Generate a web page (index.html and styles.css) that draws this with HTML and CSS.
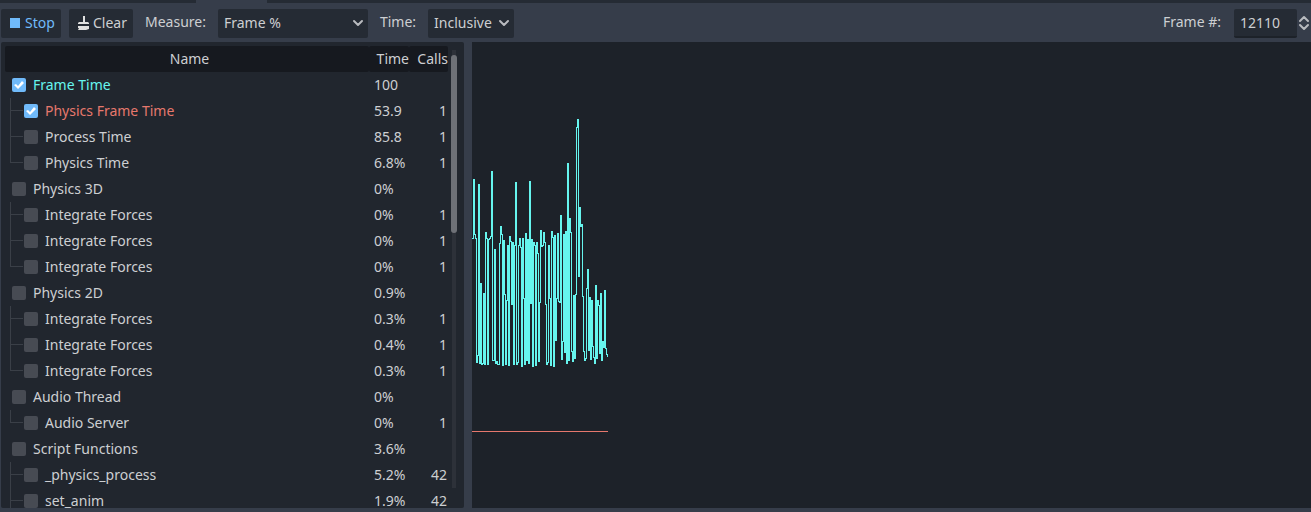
FILE: index.html
```html
<!DOCTYPE html>
<html lang="en">
<head>
  <meta charset="UTF-8">
  <meta name="viewport" content="width=device-width, initial-scale=1.0">
  <title>Profiler</title>
  <link rel="stylesheet" href="styles.css">
</head>
<body>
  <div class="tab-strip"><div class="active-tab"></div></div>

  <div class="toolbar">
    <button class="btn stop" type="button">
      <svg width="10" height="10"><rect width="10" height="10" fill="#70bafa"/></svg>Stop
    </button>
    <button class="btn clear" type="button">
      <svg width="11" height="14" viewBox="0 0 11 14" fill="#e0e0e0">
        <path d="M5 0h2v6h3l1 1v1H0V7l1-1h4zM0 10h11v3l-3 1H0l1-2H0z"/>
      </svg>Clear
    </button>
    <label for="measure">Measure:</label>
    <div class="select measure">
      <select id="measure">
        <option>Frame %</option>
        <option>Frame Time (ms)</option>
        <option>Average Time (ms)</option>
        <option>Physics Frame %</option>
      </select>
      <svg width="12" height="8" viewBox="0 0 12 8"><path d="M2 2l4 4 4-4"/></svg>
    </div>
    <label for="time">Time:</label>
    <div class="select time">
      <select id="time">
        <option>Inclusive</option>
        <option>Self</option>
      </select>
      <svg width="12" height="8" viewBox="0 0 12 8"><path d="M2 2l4 4 4-4"/></svg>
    </div>
    <label class="frame-label" for="frame">Frame #:</label>
    <input class="frame-input" id="frame" type="text" inputmode="numeric" value="12110">
    <button class="spin" type="button" aria-label="Change frame">
      <svg width="12" height="16" viewBox="0 0 12 16"><path d="M2 6l4-4 4 4M2 10l4 4 4-4"/></svg>
    </button>
  </div>

  <div class="split">
    <div class="tree">
      <table>
        <colgroup><col><col class="col-time"><col class="col-calls"></colgroup>
        <thead>
          <tr><th>Name</th><th>Time</th><th>Calls</th></tr>
        </thead>
        <tbody>
          <tr class="frame-time">
            <td><label><input type="checkbox" checked>Frame Time</label></td><td>100</td><td></td>
          </tr>
          <tr class="child physics-frame">
            <td><label><input type="checkbox" checked>Physics Frame Time</label></td><td>53.9</td><td>1</td>
          </tr>
          <tr class="child">
            <td><label><input type="checkbox">Process Time</label></td><td>85.8</td><td>1</td>
          </tr>
          <tr class="child last">
            <td><label><input type="checkbox">Physics Time</label></td><td>6.8%</td><td>1</td>
          </tr>
          <tr>
            <td><label><input type="checkbox">Physics 3D</label></td><td>0%</td><td></td>
          </tr>
          <tr class="child">
            <td><label><input type="checkbox">Integrate Forces</label></td><td>0%</td><td>1</td>
          </tr>
          <tr class="child">
            <td><label><input type="checkbox">Integrate Forces</label></td><td>0%</td><td>1</td>
          </tr>
          <tr class="child last">
            <td><label><input type="checkbox">Integrate Forces</label></td><td>0%</td><td>1</td>
          </tr>
          <tr>
            <td><label><input type="checkbox">Physics 2D</label></td><td>0.9%</td><td></td>
          </tr>
          <tr class="child">
            <td><label><input type="checkbox">Integrate Forces</label></td><td>0.3%</td><td>1</td>
          </tr>
          <tr class="child">
            <td><label><input type="checkbox">Integrate Forces</label></td><td>0.4%</td><td>1</td>
          </tr>
          <tr class="child last">
            <td><label><input type="checkbox">Integrate Forces</label></td><td>0.3%</td><td>1</td>
          </tr>
          <tr>
            <td><label><input type="checkbox">Audio Thread</label></td><td>0%</td><td></td>
          </tr>
          <tr class="child last">
            <td><label><input type="checkbox">Audio Server</label></td><td>0%</td><td>1</td>
          </tr>
          <tr>
            <td><label><input type="checkbox">Script Functions</label></td><td>3.6%</td><td></td>
          </tr>
          <tr class="child">
            <td><label><input type="checkbox">_physics_process</label></td><td>5.2%</td><td>42</td>
          </tr>
          <tr class="child">
            <td><label><input type="checkbox">set_anim</label></td><td>1.9%</td><td>42</td>
          </tr>
        </tbody>
      </table>
      <div class="scrollbar"><div class="thumb"></div></div>
    </div>

    <div class="graph">
      <svg width="136" height="390" viewBox="0 42 136 390" shape-rendering="crispEdges" fill="none">
        <g transform="translate(.5 .5)">
          <!-- frame time, one column per sample -->
          <path stroke="#66f5ee" d="M-1 238h1
            h1V179h1V234h1V238h1V362h1V355h1V184h1V363h1V283h1V364
            h1V363h1V293h1V364h1V232h1V238h1V364h1V239h1V238h1V236h1V171
            h1V360h1V360h1V249h1V363h1V361h1V364h1V364h1V243h1V226h1V234
            h1V365h1V240h1V294h1V364h1V300h1V245h1V365h1V236h1V241h1V304
            h1V242h1V364h1V245h1V182h1V364h1V362h1V245h1V238h1V247h1V366
            h1V238h1V298h1V364h1V233h1V360h1V239h1V363h1V181h1V303h1V239
            h1V366h1V242h1V245h1V365h1V242h1V253h1V361h1V302h1V230h1V246
            h1V245h1V232h1V242h1V304h1V364h1V362h1V245h1V298h1V365h1V231
            h1V237h1V366h1V235h1V340h1V298h1V233h1V301h1V302h1V215h1V359
            h1V341h1V234h1V352h1V231h1V363h1V163h1V360h1V218h1V232h1V351
            h1V361h1V295h1V358h1V294h1V127h1V119h1V276h1V207h1V226h1V224
            h1V296h1V351h1V360h1V358h1V288h1V269h1V350h1V297h1V359h1V300
            h1V346h1V357h1V363h1V285h1V358h1V300h1V305h1V353h1V293h1V360
            h1V341h1V347h1V290h1V348h1V354h1V356"/>
          <!-- physics frame time -->
          <path stroke="#e6786d" d="M-1 431h137"/>
        </g>
      </svg>
    </div>
  </div>
</body>
</html>
```
FILE: styles.css
```css
* {
  box-sizing: border-box;
}
body {
  margin: 0;
  height: 100vh;
  display: flex;
  flex-direction: column;
  overflow: hidden;
  background: #363d4a;
  color: #cdcfd2;
  font-family: "Noto Sans", sans-serif;
  font-size: 14px;
  line-height: 20px;
}
button, select, input {
  font: inherit;
  color: inherit;
  border: none;
  margin: 0;
}
svg {
  display: block;
  flex: none;
}

.tab-strip {
  height: 3px;
  flex: none;
  background: #252b34;
  padding-left: 196px;
}
.active-tab {
  width: 71px;
  height: 3px;
  background: #363d4a;
}

.toolbar {
  display: flex;
  flex: none;
  height: 39px;
  padding: 6px 0 4px 1px;
}
.toolbar label {
  height: 26px;
  line-height: 26px;
  margin: 0 12px;
}
.btn {
  display: flex;
  align-items: center;
  height: 29px;
  margin-right: 8px;
  background: #252b34;
  border-radius: 2px;
}
.stop {
  width: 60px;
  padding: 0 0 1px 9px;
  gap: 5px;
  color: #70bafa;
}
.clear {
  width: 64px;
  padding: 0 0 1px 9px;
  gap: 4px;
  margin-right: 0;
}
.select {
  position: relative;
  height: 29px;
}
.select select {
  appearance: none;
  width: 100%;
  height: 29px;
  padding: 0 6px 1px;
  background: #252b34;
  border-radius: 2px;
}
.select svg {
  position: absolute;
  right: 4px;
  top: 10px;
  pointer-events: none;
}
.select path, .spin path {
  fill: none;
  stroke: #b9bbbf;
  stroke-width: 2;
  stroke-linecap: round;
  stroke-linejoin: round;
}
.measure {
  width: 150px;
}
.time {
  width: 86px;
}
.toolbar .frame-label {
  margin: 0 13px 0 auto;
}
.frame-input {
  width: 63px;
  height: 29px;
  padding: 0 6px;
  background: #252b34;
  border-bottom: 2px solid #1d2229;
  border-radius: 2px;
}
.spin {
  width: 14px;
  height: 29px;
  padding: 0 0 1px 1px;
  background: none;
}

.split {
  display: flex;
  flex: 1;
  min-height: 0;
  gap: 8px;
  padding-left: 1px;
  margin-bottom: 4px;
}
.tree {
  display: flex;
  width: 463px;
  flex: none;
  padding: 4px 7px 0 4px;
  overflow: hidden;
  background: #21262e;
  border-radius: 2px;
}
table {
  flex: 1;
  align-self: flex-start;
  table-layout: fixed;
  border-collapse: collapse;
}
.col-time {
  width: 40px;
}
.col-calls {
  width: 39px;
}
th, td {
  height: 26px;
  padding: 0;
}
th {
  background: #16191f;
  border-radius: 2px;
  font-weight: normal;
  text-align: center;
}
th:first-child {
  padding-left: 5px;
}
th:nth-child(2), th:nth-child(3) {
  text-align: right;
}
td:nth-child(2) {
  padding-left: 5px;
}
td:nth-child(3) {
  padding-right: 1px;
  text-align: right;
}
td:first-child {
  position: relative;
  padding-left: 7px;
}
td label {
  display: flex;
  align-items: center;
  gap: 7px;
}
.child td:first-child {
  padding-left: 19px;
}
/* guide lines of the tree */
.child td:first-child::before {
  content: "";
  position: absolute;
  left: 5px;
  top: 0;
  height: 26px;
  border-left: 1px solid #3a3f47;
}
.child.last td:first-child::before {
  height: 13px;
}
.child td:first-child::after {
  content: "";
  position: absolute;
  left: 5px;
  top: 12px;
  width: 13px;
  border-top: 1px solid #3a3f47;
}
td input {
  appearance: none;
  width: 14px;
  height: 14px;
  background: #474b53;
  border-radius: 2px;
}
td input:checked {
  background: #70bafa;
}
td input:checked::before {
  content: "";
  display: block;
  height: 14px;
  background: #fff;
  clip-path: polygon(2px 7px, 4px 6px, 6px 8px, 10px 3px, 12px 5px, 6px 11px);
}
.frame-time label {
  color: #66f5ee;
}
.physics-frame label {
  color: #e6786d;
}

.scrollbar {
  width: 6px;
  margin: 4px 0 20px 3px;
  padding-top: 5px;
  background: linear-gradient(#2d3139, #2d3139) center / 4px 100% no-repeat;
}
.thumb {
  height: 41%;
  background: #6e7177;
  border-radius: 3px;
}

.graph {
  flex: 1;
  min-width: 0;
  background: #1d2229;
}
```
